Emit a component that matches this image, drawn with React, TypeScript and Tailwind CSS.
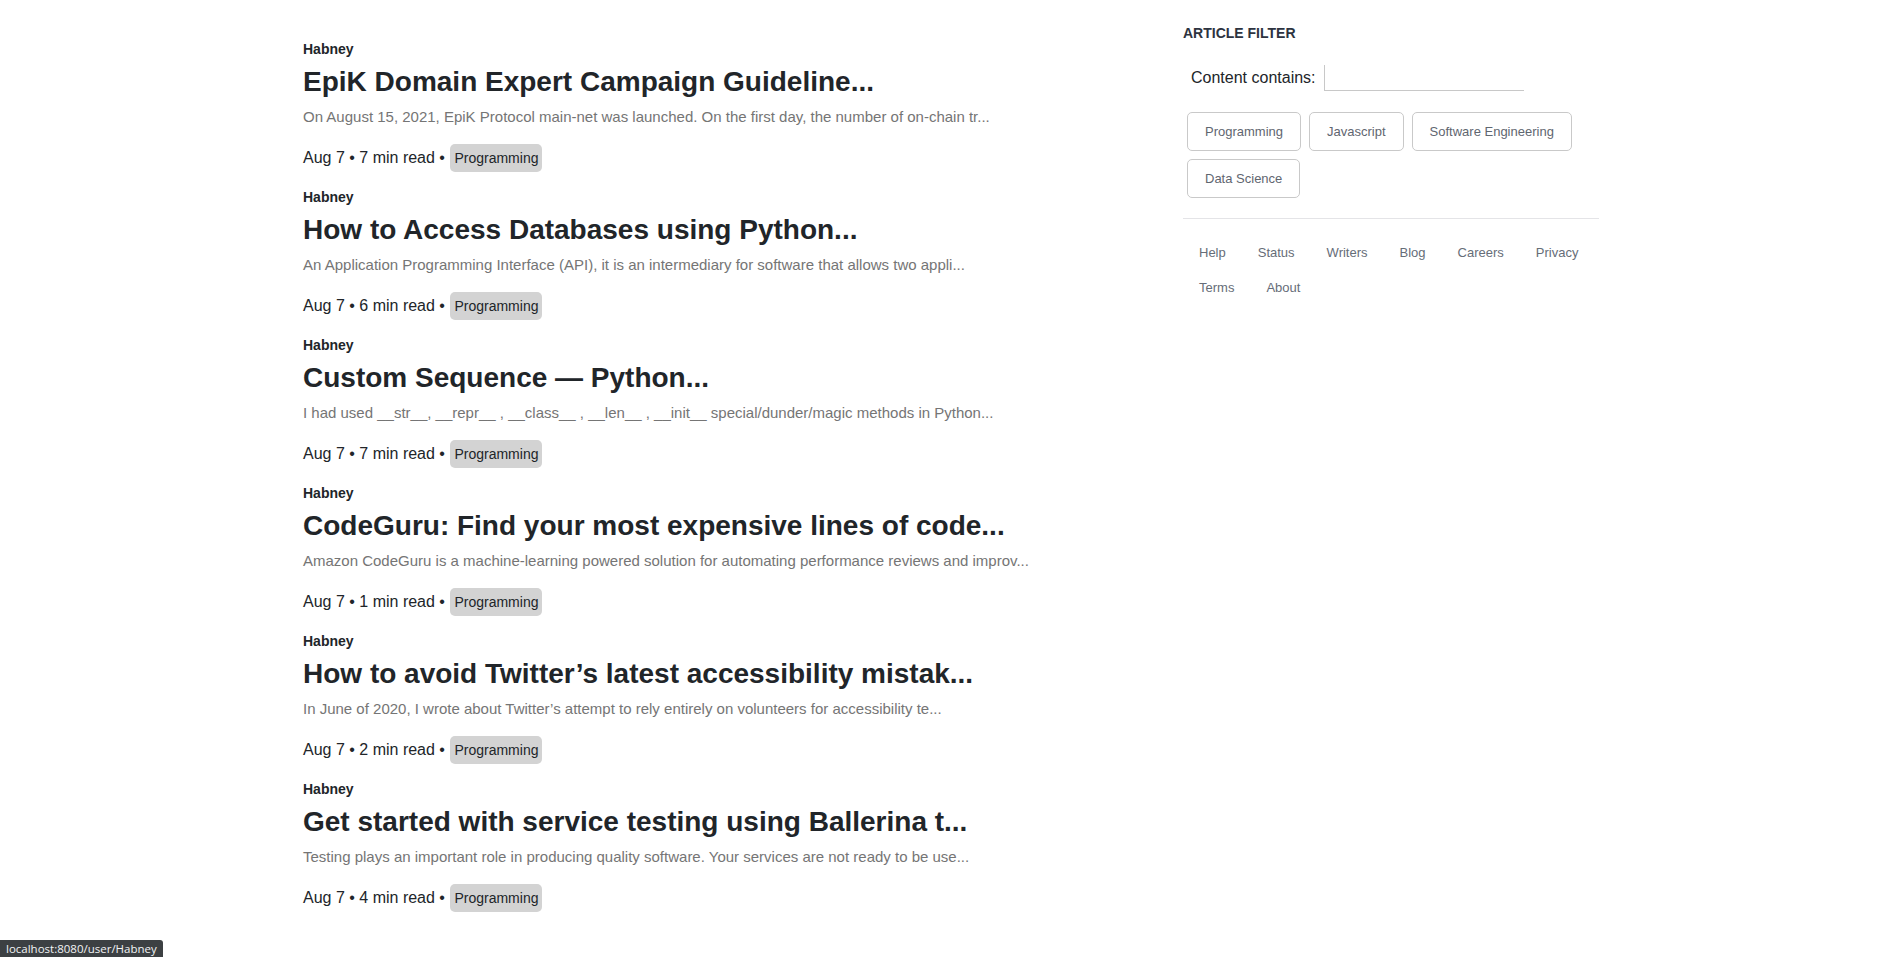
import React from 'react';

type Article = {
  author: string;
  title: string;
  excerpt: string;
  date: string;
  minutes: number;
  tag: string;
};

const articles: Article[] = [
  {
    author: 'Habney',
    title: 'EpiK Domain Expert Campaign Guideline...',
    excerpt:
      'On August 15, 2021, EpiK Protocol main-net was launched. On the first day, the number of on-chain tr...',
    date: 'Aug 7',
    minutes: 7,
    tag: 'Programming',
  },
  {
    author: 'Habney',
    title: 'How to Access Databases using Python...',
    excerpt:
      'An Application Programming Interface (API), it is an intermediary for software that allows two appli...',
    date: 'Aug 7',
    minutes: 6,
    tag: 'Programming',
  },
  {
    author: 'Habney',
    title: 'Custom Sequence — Python...',
    excerpt:
      'I had used __str__, __repr__ , __class__ , __len__ , __init__ special/dunder/magic methods in Python...',
    date: 'Aug 7',
    minutes: 7,
    tag: 'Programming',
  },
  {
    author: 'Habney',
    title: 'CodeGuru: Find your most expensive lines of code...',
    excerpt:
      'Amazon CodeGuru is a machine-learning powered solution for automating performance reviews and improv...',
    date: 'Aug 7',
    minutes: 1,
    tag: 'Programming',
  },
  {
    author: 'Habney',
    title: 'How to avoid Twitter’s latest accessibility mistak...',
    excerpt:
      'In June of 2020, I wrote about Twitter’s attempt to rely entirely on volunteers for accessibility te...',
    date: 'Aug 7',
    minutes: 2,
    tag: 'Programming',
  },
  {
    author: 'Habney',
    title: 'Get started with service testing using Ballerina t...',
    excerpt:
      'Testing plays an important role in producing quality software. Your services are not ready to be use...',
    date: 'Aug 7',
    minutes: 4,
    tag: 'Programming',
  },
];

const filterTags = ['Programming', 'Javascript', 'Software Engineering', 'Data Science'];
const footerLinks = ['Help', 'Status', 'Writers', 'Blog', 'Careers', 'Privacy', 'Terms', 'About'];

function ArticleCard({ article }: { article: Article }) {
  return (
    <div className="mb-[17px]">
      <a href="#" className="block text-[14px] leading-[16px] font-bold text-[#212529]">
        {article.author}
      </a>
      <h2 className="mt-[9px] text-[28px] leading-[32px] font-bold text-[#212529]">{article.title}</h2>
      <p className="mt-[10px] text-[15px] leading-[17px] text-[#757575]">{article.excerpt}</p>
      <div className="mt-[19px] flex items-baseline text-[16px] leading-[18px] text-[#212529]">
        <span className="whitespace-pre">
          {article.date} • {article.minutes} min read •{' '}
        </span>
        <span className="ml-[1px] rounded-[5px] bg-[#d3d3d3] px-[4px] py-[6px] text-[14px] leading-[16px]">
          {article.tag}
        </span>
      </div>
    </div>
  );
}

function FilterPanel() {
  return (
    <div>
      <h3 className="text-[14px] leading-[16px] font-bold text-[#2d3340]">ARTICLE FILTER</h3>
      <div className="mt-[24px] flex items-center">
        <label className="mx-2 text-[16px] leading-[18px] text-[#212529]">Content contains:</label>
        <input
          type="text"
          className="h-[26px] w-[200px] border-b border-l border-[#c8c8c8] bg-white px-1 text-[14px] outline-none"
        />
      </div>
      <div className="mt-[17px] flex flex-wrap">
        {filterTags.map(tag => (
          <button
            key={tag}
            className="m-1 rounded-[5px] border border-[#c9c9c9] bg-white px-[17px] py-[11px] text-[13px] leading-[15px] text-[#5f6670]"
          >
            {tag}
          </button>
        ))}
      </div>
      <hr className="mt-[16px] border-0 border-t border-[#e4e4e7]" />
      <div className="mt-[16px] flex flex-wrap">
        {footerLinks.map(link => (
          <a key={link} href="#" className="px-4 py-[10px] text-[13px] leading-[15px] text-[#666d78]">
            {link}
          </a>
        ))}
      </div>
    </div>
  );
}

export default function App() {
  return (
    <div
      className="min-h-screen bg-white leading-[1.15]"
      style={{ fontFamily: '"Liberation Sans", Arial, sans-serif' }}
    >
      <div className="mx-auto flex w-[1320px]">
        <div className="w-[880px] px-3 pt-[41px]">
          {articles.map((a, i) => (
            <ArticleCard key={i} article={a} />
          ))}
        </div>
        <div className="w-[440px] px-3 pt-[25px]">
          <FilterPanel />
        </div>
      </div>

      {/* browser status bubble */}
      <div
        className="fixed bottom-0 left-0 flex h-[17px] items-center rounded-tr-[3px] bg-[#3c4043] px-[6px] text-[11.5px] text-[#f1f3f4]"
        style={{ fontFamily: '"Open Sans", "Noto Sans", sans-serif' }}
      >
        localhost:8080/user/Habney
      </div>
    </div>
  );
}
